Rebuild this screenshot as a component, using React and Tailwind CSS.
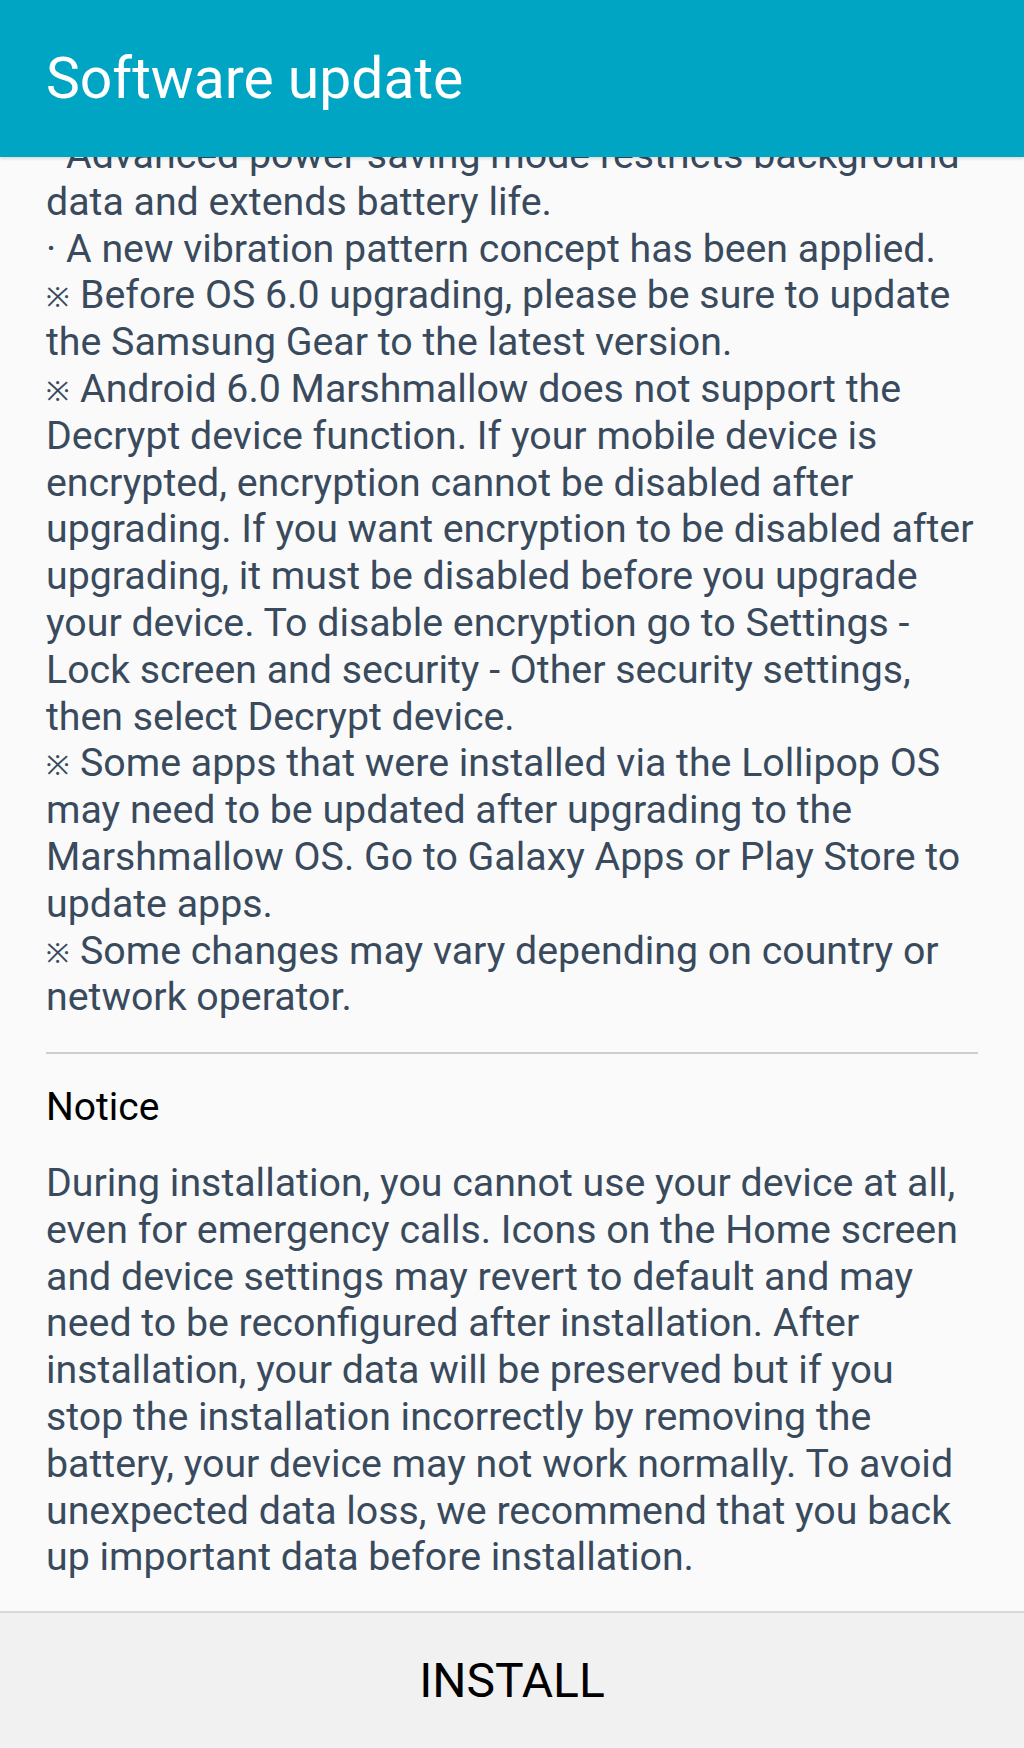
import React from "react";

const changes = [
  "· Advanced power saving mode restricts background",
  "data and extends battery life.",
  "· A new vibration pattern concept has been applied.",
  "※Before OS 6.0 upgrading, please be sure to update",
  "the Samsung Gear to the latest version.",
  "※Android 6.0 Marshmallow does not support the",
  "Decrypt device function. If your mobile device is",
  "encrypted, encryption cannot be disabled after",
  "upgrading. If you want encryption to be disabled after",
  "upgrading, it must be disabled before you upgrade",
  "your device. To disable encryption go to Settings -",
  "Lock screen and security - Other security settings,",
  "then select Decrypt device.",
  "※Some apps that were installed via the Lollipop OS",
  "may need to be updated after upgrading to the",
  "Marshmallow OS. Go to Galaxy Apps or Play Store to",
  "update apps.",
  "※Some changes may vary depending on country or",
  "network operator.",
];

const notice = [
  "During installation, you cannot use your device at all,",
  "even for emergency calls. Icons on the Home screen",
  "and device settings may revert to default and may",
  "need to be reconfigured after installation. After",
  "installation, your data will be preserved but if you",
  "stop the installation incorrectly by removing the",
  "battery, your device may not work normally. To avoid",
  "unexpected data loss, we recommend that you back",
  "up important data before installation.",
];

function Line({ text }) {
  if (text.startsWith("※")) {
    return (
      <div className="whitespace-nowrap">
        <span className="inline-block w-[34px] text-[28px] leading-none relative top-[-1px]">※</span>
        {text.slice(1)}
      </div>
    );
  }
  return <div className="whitespace-nowrap">{text}</div>;
}

export default function App() {
  return (
    <div
      className="w-[1024px] h-[1748px] flex flex-col bg-[#fafafa] overflow-hidden"
      style={{ fontFamily: "Roboto, 'Noto Sans', sans-serif" }}
    >
      <header className="relative z-10 h-[157px] shrink-0 bg-[#00a5c4] flex items-center pl-[46px] shadow-[0_2px_3px_rgba(0,0,0,0.12)]">
        <h1 className="text-white text-[57px] leading-none font-normal">Software update</h1>
      </header>
      <main className="flex-1 overflow-hidden">
        <div className="mt-[-25px] px-[46px]">
          <div className="text-[39.3px] leading-[46.8px] text-[#394a5d]">
            {changes.map((l, i) => (
              <Line key={i} text={l} />
            ))}
          </div>
          <div className="mt-[31px] h-[2px] bg-[#cfcfcf] w-[932px]" />
          <div className="mt-[30px] text-[39px] leading-[46.8px] text-black">Notice</div>
          <div className="mt-[29px] text-[39.3px] leading-[46.8px] text-[#394a5d]">
            {notice.map((l, i) => (
              <div key={i} className="whitespace-nowrap">{l}</div>
            ))}
          </div>
        </div>
      </main>
      <footer className="h-[137px] shrink-0 border-t-2 border-[#d8d8d8] bg-[#f1f1f1] flex items-center justify-center">
        <span className="text-[48px] leading-none text-black">INSTALL</span>
      </footer>
    </div>
  );
}
